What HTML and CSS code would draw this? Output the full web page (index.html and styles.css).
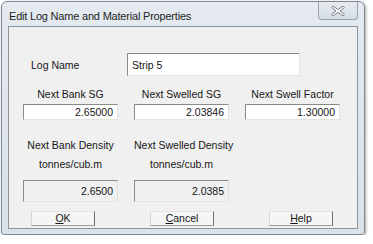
FILE: index.html
```html
<!DOCTYPE html>
<html lang="en">
<head>
    <meta charset="UTF-8">
    <title>Edit Log Name and Material Properties</title>
    <link rel="stylesheet" href="styles.css">
</head>
<body>
    <div class="window">
        <div class="titlebar">
            <span class="title">Edit Log Name and Material Properties</span>
            <div class="close-btn">
                <svg width="16" height="12" viewBox="0 0 16 12">
                    <path d="M3 1 L8 4.5 L13 1 L14.5 2.5 L10 6 L14.5 9.5 L13 11 L8 7.5 L3 11 L1.5 9.5 L6 6 L1.5 2.5 Z" fill="#f4f6f8" stroke="#7d858d" stroke-width="1" stroke-linejoin="round"/>
                </svg>
            </div>
        </div>

        <div class="client">
            <div class="name-row">
                <label class="name-label">Log Name</label>
                <div class="field name-field">Strip 5</div>
            </div>

            <div class="grid">
                <div class="cap cap-top">Next Bank SG</div>
                <div class="cap cap-top">Next Swelled SG</div>
                <div class="cap cap-top">Next Swell Factor</div>

                <div class="field num">2.65000</div>
                <div class="field num">2.03846</div>
                <div class="field num">1.30000</div>

                <div class="cap cap-density">Next Bank Density</div>
                <div class="cap cap-density">Next Swelled Density</div>
                <div></div>

                <div class="cap cap-unit">tonnes/cub.m</div>
                <div class="cap cap-unit">tonnes/cub.m</div>
                <div></div>

                <div class="field num readonly">2.6500</div>
                <div class="field num readonly">2.0385</div>
                <div></div>
            </div>

            <div class="buttons">
                <button><u>O</u>K</button>
                <button><u>C</u>ancel</button>
                <button><u>H</u>elp</button>
            </div>
        </div>
    </div>
</body>
</html>
```

FILE: styles.css
```css
body {
    margin: 0;
    background: #ffffff;
    font-family: 'Liberation Sans', Arial, sans-serif;
    font-size: 10.5px;
    color: #161616;
}

.window {
    margin: 1px 0 0 1px;
    width: 364px;
    height: 234px;
    box-sizing: border-box;
    border: 1px solid #7f8891;
    border-radius: 6px 6px 3px 3px;
    background: linear-gradient(#e4eaf0, #d9e1e9);
    padding: 0 6px 5px 6px;
    display: flex;
    flex-direction: column;
    box-shadow: 1px 1px 3px rgba(0, 0, 0, 0.35);
}

.titlebar {
    height: 24px;
    display: flex;
    justify-content: space-between;
    align-items: flex-start;
}

.title {
    font-size: 11px;
    letter-spacing: -0.2px;
    color: #1e1e1e;
    margin-top: 8px;
    margin-left: 1px;
}

.close-btn {
    width: 40px;
    height: 18px;
    box-sizing: border-box;
    border: 1px solid #9aa3ac;
    border-top: none;
    border-radius: 0 0 4px 4px;
    background: linear-gradient(#e6ebf0, #d5dde5);
    display: flex;
    align-items: center;
    justify-content: center;
    margin-right: 0;
}

.client {
    flex: 1;
    border: 1px solid #8b939b;
    background: #f0f0f0;
    padding-top: 26px;
}

.name-row {
    display: flex;
    align-items: center;
    height: 23px;
}

.name-label {
    width: 96px;
    margin-left: 22px;
}

.field {
    box-sizing: border-box;
    background: #ffffff;
    border-top: 1px solid #8a8a8a;
    border-left: 1px solid #8a8a8a;
    border-right: 1px solid #e2e2e2;
    border-bottom: 1px solid #e2e2e2;
    line-height: 14px;
}

.name-field {
    width: 173px;
    height: 23px;
    padding: 4px 4px;
}

.grid {
    display: grid;
    grid-template-columns: 95px 95px 95px;
    column-gap: 16px;
    padding-left: 14px;
    margin-top: 11px;
}

.cap {
    text-align: center;
    line-height: 14px;
    white-space: nowrap;
}

.cap-density {
    margin-top: 18px;
}

.cap-unit {
    margin-top: 5px;
}

.num {
    height: 16px;
    margin-top: 3px;
    text-align: right;
    padding-right: 4px;
    line-height: 14px;
}

.readonly {
    height: 22px;
    margin-top: 9px;
    background: #f0f0f0;
    padding-top: 3px;
}

.buttons {
    display: flex;
    gap: 55px;
    padding-left: 22px;
    margin-top: 9px;
}

button {
    width: 64px;
    height: 15px;
    padding: 0;
    font-family: inherit;
    font-size: 10.5px;
    line-height: 13px;
    color: #161616;
    background: #f5f5f5;
    border-top: 1px solid #e4e4e4;
    border-left: 1px solid #d8d8d8;
    border-right: 1px solid #707070;
    border-bottom: 1px solid #9a9a9a;
}
```
